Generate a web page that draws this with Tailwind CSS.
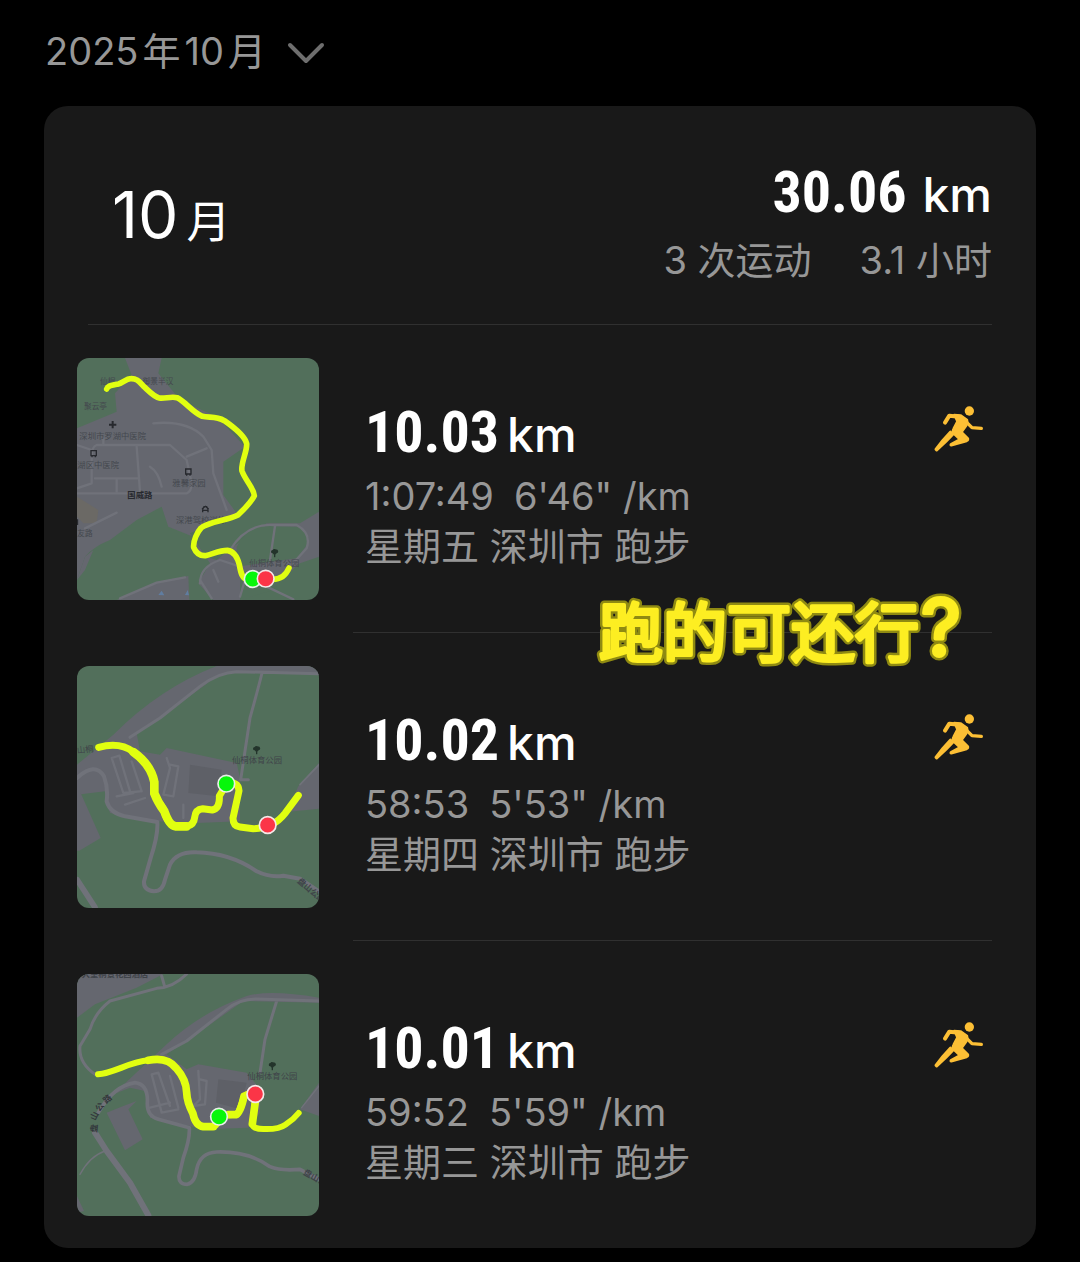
<!DOCTYPE html>
<html lang="zh-CN">
<head>
    <meta charset="UTF-8">
    <meta name="viewport" content="width=device-width, initial-scale=1.0">
    <title>2025年10月 - 运动记录</title>
    <script src="https://cdn.jsdelivr.net/npm/@tailwindcss/browser@4"></script>
</head>
<body class="min-h-screen bg-black px-11 pb-3 text-[#979797] font-['Inter','Noto_Sans_CJK_SC',sans-serif]">
    <!-- Shared icons -->
    <svg class="hidden">
        <symbol id="runner" viewBox="46 34 150 138">
            <circle cx="152" cy="49" r="14" fill="#fcbf35"/>
            <g fill="none" stroke="#fcbf35" stroke-linecap="round" stroke-linejoin="round">
                <path d="M79 84 L92 63 L122 66" stroke-width="12"/>
                <path d="M141 80 L160 99 L188 101" stroke-width="10"/>
            </g>
            <path d="M106 60 L126 61 L146 75 Q149 86 141 97 L130 112 L148 130 Q152 136 144 140 L98 153 Q93 153 96 148 L122 134 L104 117 Q99 110 104 101 L115 80Z" fill="#fcbf35" stroke="#fcbf35" stroke-width="5" stroke-linejoin="round"/>
            <path d="M95 111 L103 119 L82 141 L54 167 L51 164 L72 137 Z" fill="#fcbf35" stroke="#fcbf35" stroke-width="7" stroke-linejoin="round"/>
        </symbol>
        <symbol id="tree" viewBox="0 0 24 28">
            <path d="M1 10 Q1 6 6 5 Q9 0 14 3 Q22 3 23 9 Q23 15 16 16 L14 19 L14 27 L10 27 L10 19 L6 15 Q1 15 1 10Z" fill="#23342b"/>
        </symbol>
    </svg>

    <!-- Month picker -->
    <header class="pt-[26px] pb-[30px]">
        <button type="button" class="flex items-center gap-5 px-px text-[38px] leading-[50px]">
            <span class="flex gap-1"><span>2025</span><span>年</span><span>10</span><span>月</span></span>
            <svg class="mt-1 h-6 w-10" viewBox="0 0 40 24" fill="none" stroke="#6e6e6e" stroke-width="4" stroke-linecap="round" stroke-linejoin="round" aria-hidden="true">
                <path d="M4 4 L20 20 L36 4"/>
            </svg>
        </button>
    </header>

    <main class="relative rounded-3xl bg-[#191919]">
        <!-- Month summary -->
        <section class="mx-11 flex items-center justify-between pt-[46px] pb-[39px] pl-6">
            <h1 class="flex items-baseline gap-2 text-[64px] leading-[80px] text-white">10<span class="text-[44px]">月</span></h1>
            <div class="text-right">
                <p class="flex items-baseline justify-end gap-4 leading-[80px] text-white">
                    <span class="text-[58px] font-bold font-['Liberation_Sans_Narrow','Roboto_Condensed',sans-serif]">30.06</span>
                    <span class="text-[48px] font-medium">km</span>
                </p>
                <p class="flex justify-end gap-12 text-[38px] leading-[50px]">
                    <span>3 次运动</span>
                    <span>3.1 小时</span>
                </p>
            </div>
        </section>
        <div class="mx-11 h-px bg-[#303030]"></div>

        <!-- Runs -->
        <article class="flex pt-[33px] pr-11 pb-8 pl-[33px]">
            <svg class="size-[242px] shrink-0 rounded-xl" viewBox="21 24 726 726" font-size="23" fill="#44484e" role="img" aria-label="跑步路线">
                <path d="M0 0H768V768H0Z" fill="#526f5b"/>
                <path d="M165 24 L185 75 L135 130 L140 185 L21 235 L21 690 L45 620 Q70 590 120 570 L200 510 L275 470 L295 530 L370 560 L390 615 L440 630 L490 590 L590 520 L690 520 L747 485 V620 L690 640 L600 720 L510 750 L430 750 L385 700 L420 640 L360 550 L500 490 L460 435 L460 335 L525 290 L440 200 L330 150 L265 70 L275 24Z" fill="#65676f"/>
                <path d="M140 750 L270 695 L355 678 L358 750Z M21 690 L45 620 L70 600 L45 660Z" fill="#65676f"/>
                <path d="M500 590 Q530 530 600 528 L690 530 Q720 550 715 580 L680 625 L500 650Z M510 690 L640 680 L610 720 L510 750Z" fill="#526f5b"/>
                <path d="M21 440 L85 480 L80 520 L40 520 L21 500Z" fill="#6b6965"/>
                <g fill="none" stroke="#70727a" stroke-width="7" stroke-linecap="round" stroke-linejoin="round">
                    <path d="M21 430 H350 Q365 425 365 400 L350 330 L300 285 H80 Q65 290 65 320 V400 L21 415"/>
                    <path d="M200 290 L210 425 M75 385 H205 M140 388 V425 M240 350 Q265 365 275 410 M100 285 V265 M250 220 Q350 210 400 260 L425 300 L430 370 L470 480 M350 320 L410 295 M45 535 L140 488 M21 285 L65 300"/>
                    <path d="M480 600 Q530 520 610 525 H680 Q725 550 710 595 L660 650 M615 528 L600 630 M510 740 L525 690 M390 700 Q390 650 450 630 L510 650 M390 690 L425 745 M150 745 L260 698 L345 682 M590 710 L670 748 M430 660 L445 695"/>
                </g>
                <path d="M265 735 L275 722 L283 736Z M345 735 L353 720 L357 736Z" fill="#607da0"/>
                <text x="90" y="103">仙桐</text><text x="218" y="103">御景半汉</text>
                <text x="42" y="178">聚云亭</text>
                <path d="M117 224H139M128 213V235" stroke="#27292e" stroke-width="6"/>
                <text x="28" y="266" font-size="25">深圳市罗湖中医院</text>
                <path d="M63 302H79V317H63Z M66 318V322M76 318V322 M347 357H363V372H347Z M350 373V377M360 373V377" fill="none" stroke="#27292e" stroke-width="4"/>
                <text x="22" y="353" font-size="25">湖区中医院</text>
                <text x="307" y="409" font-size="25">雅馨家园</text>
                <text x="172" y="443" font-size="25" font-weight="700" fill="#27292e">国威路</text>
                <path d="M397 480 L402 470H410L415 480M398 487V481H414V487M396 477L406 469 416 477" fill="none" stroke="#27292e" stroke-width="4"/>
                <text x="318" y="520" font-size="25">深港驾校训练</text>
                <path d="M21 508V525" stroke="#27292e" stroke-width="7"/>
                <text x="22" y="559">友路</text>
                <use href="#tree" x="602" y="595" width="24" height="28"/>
                <text x="538" y="648" font-size="25">仙桐体育公园</text>
                <path d="M110 117 C113 107 123 106 145 102 C161 98 168 86 182 86 C202 85 209 97 222 110 C239 126 253 141 268 144 C284 147 303 138 321 143 C345 154 368 187 397 199 C418 204 438 198 463 212 C489 230 524 256 530 281 C532 304 511 341 516 363 C524 388 551 413 553 437 C543 457 523 477 504 495 C473 511 414 515 393 534 C382 546 369 573 371 592 C378 609 388 618 406 617 C427 613 447 601 472 601 C492 604 503 624 508 644 C512 666 515 682 528 688 H600 Q641 692 657 654" fill="none" stroke="#e1ff10" stroke-width="17" stroke-linecap="round" stroke-linejoin="round"/>
                <circle cx="548" cy="687" r="25" fill="#07f60b" stroke="#e8efe8" stroke-width="5"/>
                <circle cx="587" cy="686" r="25" fill="#fb3547" stroke="#f4e8e8" stroke-width="5"/>
            </svg>
            <div class="ml-[46px] flex flex-1 flex-col justify-center pt-2 text-[38px] leading-[50px]">
                <h2 class="flex items-baseline gap-2 leading-[72px] text-white">
                    <span class="text-[58px] font-bold font-['Liberation_Sans_Narrow','Roboto_Condensed',sans-serif]">10.03</span>
                    <span class="text-[48px] font-medium">km</span>
                </h2>
                <p class="flex gap-5"><span>1:07:49</span><span>6'46" /km</span></p>
                <p>星期五 深圳市 跑步</p>
            </div>
            <svg class="mt-12 mr-2 h-[46px] w-[50px]" role="img" aria-label="跑步"><use href="#runner"/></svg>
        </article>
        <div class="mr-11 ml-[309px] h-px bg-[#303030]"></div>

        <article class="flex pt-[33px] pr-11 pb-8 pl-[33px]">
            <svg class="size-[242px] shrink-0 rounded-xl" viewBox="21 24 726 726" font-size="25" fill="#3f4349" role="img" aria-label="跑步路线">
                <path d="M0 0H768V768H0Z" fill="#526f5b"/>
                <path d="M21 320 L130 230 Q270 90 440 24 H747 V52 L580 40 L450 48 L270 180 L200 225 L210 280 L270 290 L290 270 L500 315 L510 360 V490 L380 495 L260 490 L120 465 L105 400 L21 410Z" fill="#65676f"/>
                <path d="M360 320 L455 335 L445 415 L355 405Z" fill="#5e6067"/>
                <path d="M747 315 L685 385 L650 462 L747 452Z M32 405 L92 540 L28 578 H21 V405Z" fill="#65676f"/>
                <g fill="none" stroke="#70727a" stroke-linecap="round" stroke-linejoin="round">
                    <path d="M180 238 L270 180 L390 85 Q445 43 500 41 L747 47 M576 45 Q565 90 540 180 L512 365 H535" stroke-width="9"/>
                    <path d="M125 300 L160 405 L210 400 M125 300 L148 293 L180 400 M185 310 L215 400 M165 440 L225 420 M140 415 L190 405 M290 300 L300 330 L280 410 L310 415 L325 325 L300 320 M340 440 V480" stroke-width="7"/>
                    <path d="M21 360 Q75 310 102 355 Q115 390 110 430 Q120 465 165 475 L262 492 Q265 530 242 600 L222 670 Q220 697 252 700 Q278 700 285 665 L300 620 Q320 580 380 583 Q480 585 560 640 Q600 660 640 653 L690 662 L747 700" stroke-width="12"/>
                    <path d="M21 665 L75 748" stroke-width="17"/>
                    <path d="M690 380 L747 320" stroke-width="5"/>
                </g>
                <text x="22" y="286" transform="rotate(-6 22 286)">山桐</text>
                <use href="#tree" x="548" y="262" width="24" height="28"/>
                <text x="486" y="316">仙桐体育公园</text>
                <text x="680" y="672" transform="rotate(40 680 672)" font-weight="700">盘山公路</text>
                <path d="M86 268 Q150 251 190 282 Q243 320 253 372 V406 Q263 432 279 450 Q293 500 316 505 H350 Q372 501 374 478 Q376 454 398 452 L427 456 Q450 451 448 414 L470 377 Q505 369 507 398 L489 480 Q489 505 510 507 L550 512 Q610 511 645 466 L685 412" fill="none" stroke="#e1ff10" stroke-width="21" stroke-linecap="round" stroke-linejoin="round"/>
                <path d="M190 282 Q243 320 253 372 V406 Q263 432 283 460 Q298 502 316 505 H350" fill="none" stroke="#e1ff10" stroke-width="26" stroke-linecap="round"/>
                <circle cx="469" cy="377" r="25" fill="#07f60b" stroke="#e8efe8" stroke-width="5"/>
                <circle cx="593" cy="501" r="25" fill="#fb3547" stroke="#f4e8e8" stroke-width="5"/>
            </svg>
            <div class="ml-[46px] flex flex-1 flex-col justify-center pt-2 text-[38px] leading-[50px]">
                <h2 class="flex items-baseline gap-2 leading-[72px] text-white">
                    <span class="text-[58px] font-bold font-['Liberation_Sans_Narrow','Roboto_Condensed',sans-serif]">10.02</span>
                    <span class="text-[48px] font-medium">km</span>
                </h2>
                <p class="flex gap-5"><span>58:53</span><span>5'53" /km</span></p>
                <p>星期四 深圳市 跑步</p>
            </div>
            <svg class="mt-12 mr-2 h-[46px] w-[50px]" role="img" aria-label="跑步"><use href="#runner"/></svg>
        </article>
        <div class="mr-11 ml-[309px] h-px bg-[#303030]"></div>

        <article class="flex pt-[33px] pr-11 pb-8 pl-[33px]">
            <svg class="size-[242px] shrink-0 rounded-xl" viewBox="21 24 726 726" font-size="25" fill="#3f4349" role="img" aria-label="跑步路线">
                <path d="M0 0H768V768H0Z" fill="#526f5b"/>
                <path d="M21 24 H280 L200 65 L75 115 L21 155Z" fill="#65676f"/>
                <path d="M130 385 L290 235 Q390 140 530 90 Q600 70 747 95 V110 L520 105 L350 225 L290 265 L350 310 L385 295 L530 320 L570 370 V440 L535 485 L400 490 L360 480 L240 455 L225 375 L180 365Z M200 405 L160 420 L110 440 L165 553 L218 520 L175 430Z M747 350 L690 430 L747 450Z" fill="#65676f"/>
                <path d="M445 340 L530 350 L510 430 L438 410Z" fill="#5e6067"/>
                <path d="M21 690 L42 735 L21 740Z" fill="#65676f"/>
                <g fill="none" stroke="#70727a" stroke-linecap="round" stroke-linejoin="round">
                    <path d="M350 24 Q310 65 260 67 L120 105 Q75 140 60 190 L30 240 Q25 290 75 325 M275 30 L283 58 M275 265 L350 225 L470 130 Q510 98 560 99 L747 105 M620 105 L585 220 L570 320" stroke-width="9"/>
                    <path d="M245 325 L275 440 L325 430 M245 325 L265 320 L300 420 M300 330 L325 425 M240 425 L300 410 M385 315 L390 400 L370 420 L405 415 L410 345 L390 340" stroke-width="7"/>
                    <path d="M85 440 Q130 360 195 350 Q235 355 232 410 Q230 450 265 460 L358 485 Q360 520 340 575 L327 630 Q325 655 352 655 Q375 650 380 610 Q390 560 440 558 Q535 555 600 602 Q630 615 690 610 L747 640" stroke-width="11"/>
                    <path d="M75 500 L110 555 L180 650 L235 748" stroke-width="18"/>
                    <path d="M30 625 Q60 570 105 555 M695 425 L747 360" stroke-width="4"/>
                </g>
                <text x="35" y="34" font-weight="700">大望桐景花园酒店</text>
                <use href="#tree" x="595" y="286" width="24" height="28"/>
                <text x="532" y="340">仙桐体育公园</text>
                <g font-weight="700" fill="#33373c">
                    <text x="109" y="414" transform="rotate(-42 109 414)">路</text>
                    <text x="88" y="438" transform="rotate(-50 88 438)">公</text>
                    <text x="76" y="465" transform="rotate(-65 76 465)">山</text>
                    <text x="80" y="500" transform="rotate(-85 80 500)">盘</text>
                </g>
                <text x="698" y="625" transform="rotate(28 698 625)" font-weight="700">盘山公</text>
                <path d="M84 325 C130 322 180 287 235 283 Q292 271 319 307 Q349 341 350 380 Q351 409 369 443 Q375 478 400 482 H430 Q448 477 447 451 Q475 446 502 446 L522 391 Q531 377 557 384 L547 474 Q549 489 580 489 Q626 491 648 475 Q670 461 686 441" fill="none" stroke="#e1ff10" stroke-width="18" stroke-linecap="round" stroke-linejoin="round"/>
                <path d="M235 283 Q292 271 319 307 Q349 341 350 380 Q351 409 369 443 Q376 478 400 482 H430 M475 446 H498 Q512 440 522 391 M557 400 L547 474" fill="none" stroke="#e1ff10" stroke-width="23" stroke-linecap="round" stroke-linejoin="round"/>
                <circle cx="447" cy="452" r="25" fill="#07f60b" stroke="#e8efe8" stroke-width="5"/>
                <circle cx="556" cy="384" r="25" fill="#fb3547" stroke="#f4e8e8" stroke-width="5"/>
            </svg>
            <div class="ml-[46px] flex flex-1 flex-col justify-center pt-2 text-[38px] leading-[50px]">
                <h2 class="flex items-baseline gap-2 leading-[72px] text-white">
                    <span class="text-[58px] font-bold font-['Liberation_Sans_Narrow','Roboto_Condensed',sans-serif]">10.01</span>
                    <span class="text-[48px] font-medium">km</span>
                </h2>
                <p class="flex gap-5"><span>59:52</span><span>5'59" /km</span></p>
                <p>星期三 深圳市 跑步</p>
            </div>
            <svg class="mt-12 mr-2 h-[46px] w-[50px]" role="img" aria-label="跑步"><use href="#runner"/></svg>
        </article>

        <!-- Caption sticker -->
        <svg class="absolute top-[486px] right-16 h-20 w-[380px]" viewBox="0 0 380 80" font-size="64" stroke-linejoin="round">
            <defs><text id="caption" x="7" y="64">跑的可还行<tspan dx="2" font-size="78">?</tspan></text></defs>
            <use href="#caption" fill="#8f8a12" stroke="#8f8a12" stroke-width="9"/>
            <use href="#caption" fill="#fdee22" stroke="#fdee22" stroke-width="4"/>
        </svg>
    </main>
</body>
</html>
